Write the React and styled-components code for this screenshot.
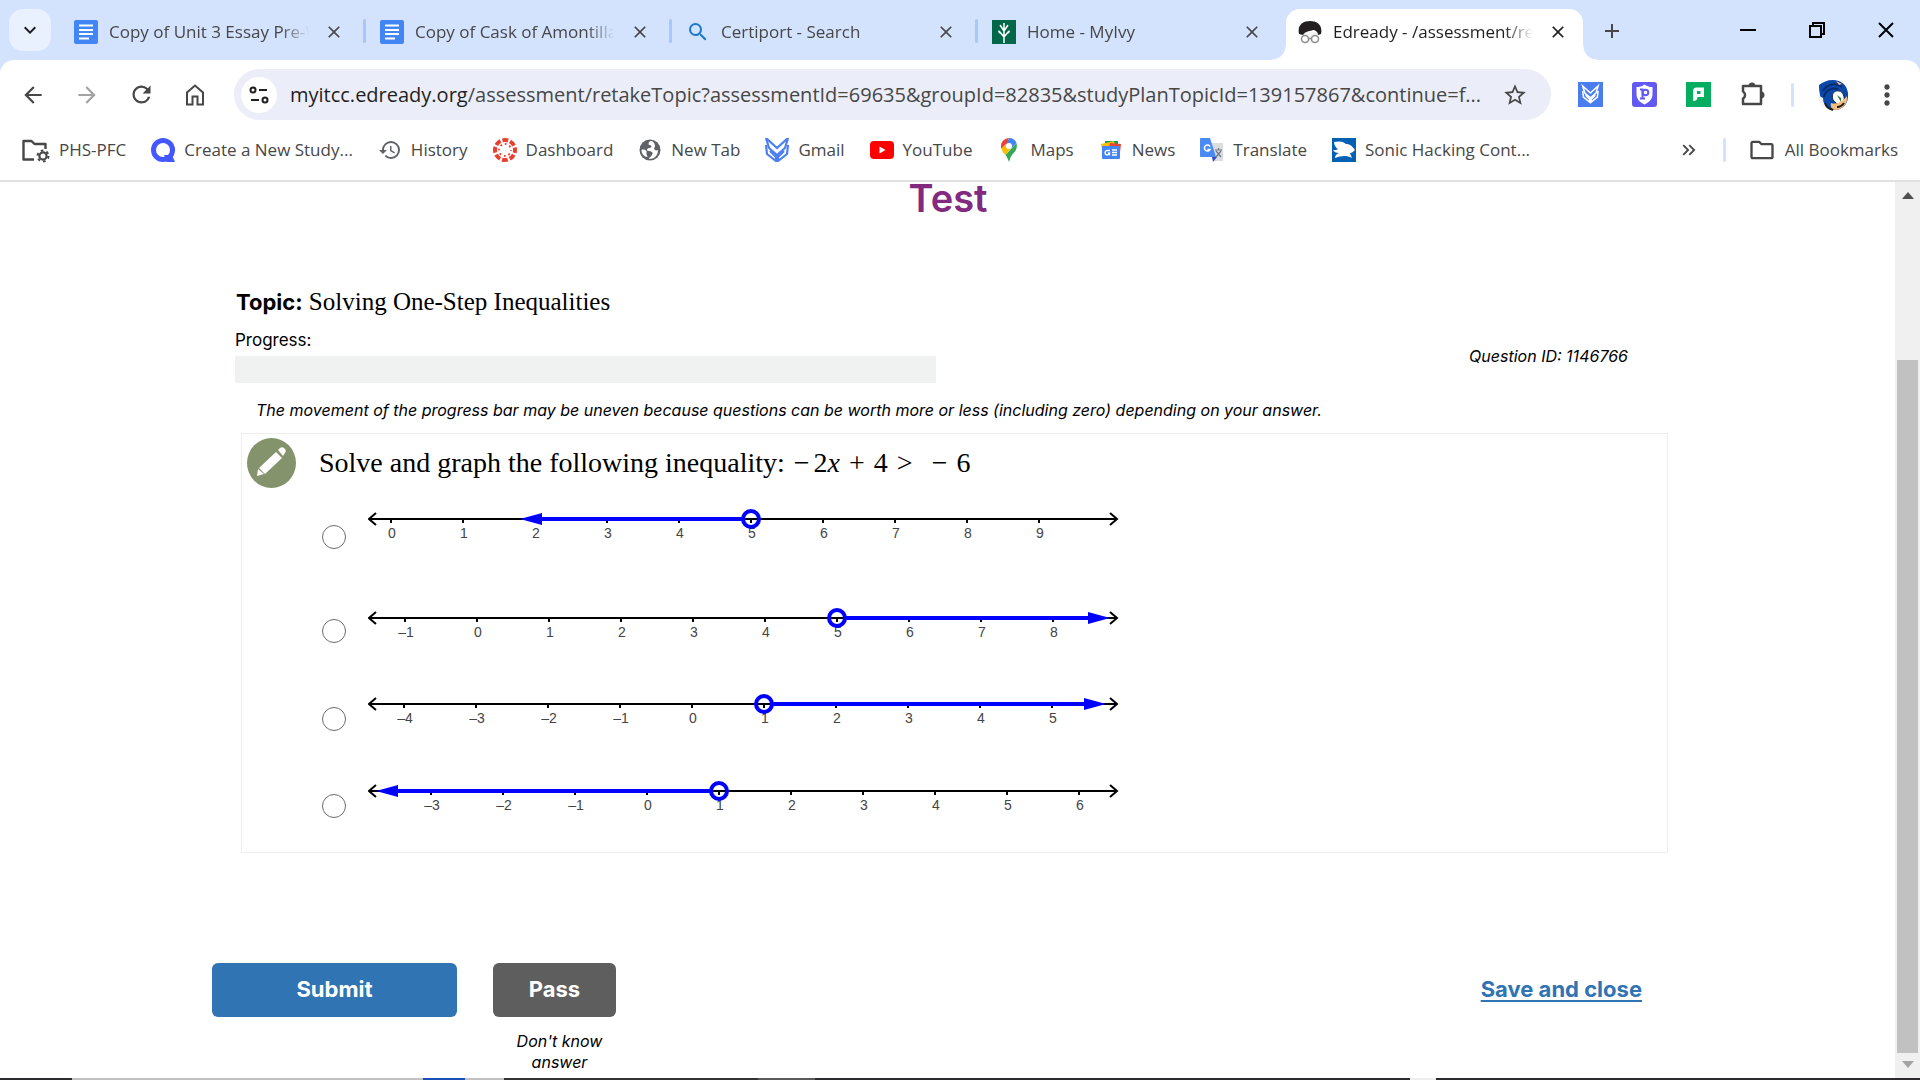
import React, { useState } from "react";
import styled, { createGlobalStyle } from "styled-components";
import {
  MdArrowBack,
  MdArrowForward,
  MdRefresh,
  MdHistory,
  MdStarBorder,
  MdMoreVert,
  MdOutlineFolder,
  MdClose,
  MdAdd,
  MdKeyboardArrowDown,
  MdKeyboardDoubleArrowRight,
  MdSearch,
} from "react-icons/md";

const GlobalStyle = createGlobalStyle`
    * { box-sizing: border-box; }
    body {
        margin: 0;
        background: #fff;
        overflow: hidden;
    }
    button { font: inherit; color: inherit; }
`

const uiFont = `"Open Sans", "Noto Sans", sans-serif`;
const pageFont = `Inter, "Open Sans", sans-serif`;
const serifFont = `"Liberation Serif", "Times New Roman", serif`;

const Window = styled.div`
    height: 100vh;
    display: flex;
    flex-direction: column;
    font-family: ${uiFont};
    color: #474747;
`

/* tab strip */
const TabStrip = styled.header`
    display: flex;
    align-items: flex-start;
    height: 60px;
    padding: 9px 0 0 9px;
    background: #d3e2fd;
`
const TabSearch = styled.button`
    display: flex;
    align-items: center;
    justify-content: center;
    width: 42px;
    height: 42px;
    margin-right: 9px;
    padding: 0;
    border: 0;
    border-radius: 14px;
    background: #e9f0fe;
    color: #1f1f1f;
`
const Tab = styled.div`
    position: relative;
    display: flex;
    align-items: center;
    gap: 11px;
    width: ${({ $active }) => ($active ? "297px" : "306px")};
    height: 51px;
    margin: ${({ $active }) => ($active ? "0 7px 0 2px" : "0")};
    padding: ${({ $active }) => ($active ? "0 13px 6px 12px" : "0 20px 6px 14px")};
    border-radius: 14px 14px 0 0;
    background: ${({ $active }) => ($active ? "#fff" : "transparent")};
    color: ${({ $active }) => ($active ? "#1f1f1f" : "#474747")};
    &::before, &::after {
        content: "";
        display: ${({ $active }) => ($active ? "block" : "none")};
        position: absolute;
        bottom: 0;
        width: 14px;
        height: 14px;
    }
    &::before {
        left: -14px;
        background: radial-gradient(circle at 0 0, transparent 13px, #fff 14px);
    }
    &::after {
        right: -14px;
        background: radial-gradient(circle at 100% 0, transparent 13px, #fff 14px);
    }
`
const TabTitle = styled.span`
    flex: 1;
    overflow: hidden;
    white-space: nowrap;
    font-size: 17px;
    line-height: 24px;
    mask-image: linear-gradient(to right, #000 85%, transparent 99%);
`
const PlainButton = styled.button`
    display: flex;
    align-items: center;
    justify-content: center;
    flex: none;
    width: ${({ $size }) => $size || 24}px;
    height: ${({ $size }) => $size || 24}px;
    padding: 0;
    border: 0;
    border-radius: 50%;
    background: none;
    color: ${({ $muted }) => ($muted ? "#a3a3a3" : "inherit")};
`
const TabDivider = styled.span`
    position: absolute;
    right: 0;
    top: 10px;
    width: 3px;
    height: 24px;
    border-radius: 2px;
    background: #a8c7fa;
`
const WindowButtons = styled.div`
    display: flex;
    margin-left: auto;
`
const WindowButton = styled.button`
    display: flex;
    align-items: center;
    justify-content: center;
    width: 69px;
    height: 42px;
    padding: 0;
    border: 0;
    background: none;
    color: #000;
`

/* address row */
const ToolbarBack = styled.div`
    background: #d3e2fd;
`
const Toolbar = styled.div`
    display: flex;
    align-items: center;
    gap: 18px;
    padding: 9px 15px;
    border-radius: 14px 14px 0 0;
    background: #fff;
`
const AddressBar = styled.div`
    flex: 1;
    min-width: 0;
    display: flex;
    align-items: center;
    height: 51px;
    margin: 0 3px;
    padding: 0 18px 0 7px;
    border-radius: 26px;
    background: #ebeef8;
`
const SiteInfo = styled(PlainButton)`
    margin-right: 13px;
    background: #fff;
    color: #1f1f1f;
`
const Url = styled.span`
    flex: 1;
    overflow: hidden;
    white-space: nowrap;
    font-size: 20px;
    line-height: 28px;
    color: #474747;
    b {
        font-weight: 400;
        color: #1f1f1f;
    }
`
const Divider = styled.span`
    width: 3px;
    height: 24px;
    margin: 0 3px;
    border-radius: 2px;
    background: #d3e2fd;
`

/* bookmarks */
const BookmarkBar = styled.nav`
    display: flex;
    align-items: center;
    gap: 25px;
    height: 53px;
    padding: 0 22px 9px 22px;
    border-bottom: 2px solid #e1e1e1;
`
const Bookmark = styled.a`
    display: flex;
    align-items: center;
    gap: 9px;
    font-size: 17px;
    line-height: 24px;
    white-space: nowrap;
    color: #474747;
    text-decoration: none;
`
const BookmarkEnd = styled.div`
    display: flex;
    align-items: center;
    gap: 19px;
    margin-left: auto;
`

/* page */
const Viewport = styled.div`
    flex: 1;
    min-height: 0;
    display: flex;
`
const Page = styled.main`
    flex: 1;
    min-width: 0;
    overflow: hidden;
    padding: 0 227px 0 212px;
    font-family: ${pageFont};
    color: #000;
`
const Title = styled.h1`
    margin: 0 0 72px 16px;
    text-align: center;
    font-size: 38px;
    line-height: 32px;
    font-weight: 600;
    color: #822980;
`
const Topic = styled.h2`
    margin: 0 0 10px 24px;
    font-family: ${serifFont};
    font-size: 25px;
    line-height: 32px;
    font-weight: 400;
    b {
        font-family: ${pageFont};
        font-size: 22px;
    }
`
const ProgressRow = styled.div`
    display: flex;
    align-items: center;
    justify-content: space-between;
    margin: 0 32px 15px 23px;
`
const ProgressBlock = styled.div`
    width: 50%;
    font-size: 17px;
    line-height: 24px;
`
const ProgressTrack = styled.div`
    height: 27px;
    margin-top: 4px;
    background: #f0f2f1;
`
const QuestionId = styled.span`
    margin-right: 8px;
    font-size: 16px;
    line-height: 24px;
    font-style: italic;
`
const Note = styled.p`
    margin: 0 0 11px 44px;
    font-size: 16px;
    line-height: 24px;
    font-style: italic;
`
const QuestionCard = styled.form`
    margin-left: 29px;
    border: 1px solid #eee;
`
const QuestionHead = styled.div`
    display: flex;
    align-items: center;
    gap: 23px;
    padding: 4px 5px 2px;
    font-family: ${serifFont};
    font-size: 28px;
    line-height: 32px;
`
const MathText = styled.span`
    margin-left: 9px;
    white-space: nowrap;
`
const Operator = styled.span`
    margin: 0 9px;
`
const Sign = styled.span`
    margin: 0 ${({ $wide }) => ($wide ? "9px" : "4px")} 0 ${({ $wide }) => ($wide ? "10px" : "0")};
`
const Option = styled.label`
    display: flex;
    align-items: center;
    gap: 22px;
    padding-left: 80px;
`
const Radio = styled.input`
    appearance: none;
    flex: none;
    width: 24px;
    height: 24px;
    margin: 0;
    border: 1px solid #6b6b6b;
    border-radius: 50%;
    background: #fff;
    &:checked {
        border: 7px solid #0075ff;
    }
`
const Actions = styled.div`
    display: flex;
    align-items: flex-start;
    margin-top: 110px;
`
const ActionButton = styled.button`
    width: ${({ $primary }) => ($primary ? "245px" : "123px")};
    height: 54px;
    padding: 0 0 2px;
    border: 0;
    border-radius: 6px;
    background: ${({ $primary }) => ($primary ? "#3074b4" : "#5e5e5e")};
    color: #fff;
    font-size: 22px;
    font-weight: 700;
`
const PassColumn = styled.div`
    margin-left: 36px;
    width: 133px;
`
const PassHint = styled.p`
    margin: 14px 0 0;
    padding: 0 20px;
    text-align: center;
    font-size: 16px;
    line-height: 21px;
    font-style: italic;
`
const SaveLink = styled.a`
    margin: 10px 26px 0 auto;
    font-size: 22px;
    line-height: 32px;
    font-weight: 700;
    color: #3074b4;
    text-underline-offset: 3px;
    text-decoration-thickness: 2px;
`

/* scrollbar and the sliver of taskbar under the window */
const Scrollbar = styled.div`
    display: flex;
    flex-direction: column;
    align-items: center;
    width: 25px;
    padding: 10px 0 9px;
    background: #f0f0f0;
`
const ScrollTrack = styled.div`
    flex: 1;
    width: 21px;
    margin: 3px 0 8px;
    display: flex;
    align-items: flex-end;
`
const ScrollThumb = styled.div`
    width: 100%;
    height: calc(82% - 4px);
    background: #c1c1c1;
`
const Taskbar = styled.div`
    height: 2px;
    background: linear-gradient(
        to right,
        #2d2b2d 72px, #c1c1c1 72px 423px, #1d4fb8 423px 465px,
        #c1c1c1 465px 504px, #333 504px 758px, #5a5a5a 758px 815px,
        #2d2b2d 815px 1410px, #eee 1410px 1436px, #2d2b2d 1436px
    );
`

const DocsIcon = () => (
  <svg width="24" height="24" viewBox="0 0 24 24">
    <rect width="24" height="24" rx="2" fill="#4285f4" />
    <path d="M5 5.500h14M5 10h14M5 14h14M5 18.500h10" stroke="#fff" strokeWidth="2" />
  </svg>
);

const IvyIcon = () => (
  <svg width="24" height="24" viewBox="0 0 24 24">
    <rect width="24" height="24" fill="#006848" />
    <path d="M12 23V3M12 17L7 11M12 17l5-6M12 11L8 5M12 11l4-6" stroke="#fff" strokeWidth="1.500" fill="none" />
    <path d="M7 10l1 4-2-2zM17 10l-1 4 2-2z" fill="#fff" />
  </svg>
);

const EdreadyIcon = () => (
  <svg width="24" height="24" viewBox="0 0 24 24">
    <path d="M3 12v5c1 5 5 6 9 6s8-1 9-6v-5z" fill="#f3f3f3" />
    <path d="M1 14C-1 5 5 1 12 1s13 4 11 13l-3 1c0-3-2-4-4-5-4 1-9 1-11 5l-4-1z" fill="#231f20" />
    <g fill="#fff" stroke="#8d8d8d" strokeWidth="1.500">
      <circle cx="7" cy="19" r="3.500" />
      <circle cx="17" cy="19" r="3.500" />
      <path d="M10.500 18.500h3" />
    </g>
  </svg>
);

const HomeIcon = () => (
  <svg width="24" height="24" viewBox="0 0 24 24">
    <path d="M4 21.500V9.500l8-7 8 7v12h-5.500v-8h-5v8z" fill="none" stroke="currentColor" strokeWidth="2" />
  </svg>
);

const TuneIcon = () => (
  <svg width="22" height="22" viewBox="0 0 22 22" fill="none" stroke="currentColor" strokeWidth="2">
    <circle cx="5" cy="6" r="2.500" />
    <circle cx="17" cy="16" r="2.500" />
    <path d="M11 6h8M3 16h8" />
  </svg>
);

const ExtensionIcon = () => (
  <svg width="28" height="28" viewBox="0 0 28 28">
    <path d="M5 5h18v18H5v-5.500a4 4 0 0 0 0-7z" fill="none" stroke="#474747" strokeWidth="2.500" strokeLinejoin="round" />
    <path d="M10.500 5a3.500 3.500 0 0 1 7 0zM23 10.500a3.500 3.500 0 0 1 0 7z" fill="#474747" />
  </svg>
);

const WingPaths = () => (
  <>
    <path d="M1 0l11 10L23 0l-3 10-8 7-8-7z" fill="none" strokeWidth="2.200" />
    <path d="M1 7l1 9 9 7v-6M23 7l-1 9-9 7v-6M5 13l6 6M19 13l-6 6" fill="none" strokeWidth="2.200" />
  </>
);

const WingIcon = () => (
  <svg width="24" height="24" viewBox="0 0 24 24" stroke="#4c80f1">
    <WingPaths />
  </svg>
);

const WingTile = () => (
  <svg width="25" height="25" viewBox="0 0 25 25">
    <rect width="25" height="25" fill="#4a7df0" />
    <g transform="translate(4 4) scale(.7)" stroke="#fff">
      <WingPaths />
    </g>
  </svg>
);

const ShieldIcon = () => (
  <svg width="25" height="25" viewBox="0 0 25 25">
    <rect width="25" height="25" rx="3" fill="#6259f5" />
    <path d="M12.500 2.500c3 2 5 2.500 8 2.500v7c0 5-3 8-8 10.500C7.500 20 4.500 17 4.500 12V5c3 0 5-.5 8-2.500z" fill="#fff" />
    <path d="M8 7.500h2.500v9M8 16.500h5" stroke="#6259f5" strokeWidth="2" fill="none" />
    <circle cx="13.500" cy="10.500" r="2.800" stroke="#6259f5" strokeWidth="2" fill="none" />
  </svg>
);

const GreenTile = () => (
  <svg width="25" height="25" viewBox="0 0 25 25">
    <rect width="25" height="25" fill="#05ad60" />
    <path d="M7 19V9c0-2 1.500-3.500 3.500-3.500H18V15h-6.500c0 2.500-1.500 4-4.500 4z" fill="#fff" />
    <rect x="11" y="9" width="3.500" height="3" fill="#05ad60" />
  </svg>
);

const Avatar = () => (
  <svg width="32" height="32" viewBox="0 0 32 32">
    <path d="M2 6c4-3 8-5 14-5 8 0 14 5 15 13 1 9-4 17-13 17-5 0-8-3-11-7-3-2-5-9-5-18z" fill="#0b48a8" />
    <path d="M1 15c1 2 3 3 5 4l1 10c-3-2-6-7-6-14z" fill="#f4f4f4" />
    <path d="M6 12c4-7 13-9 19-4M7 18c1-6 7-10 14-8" stroke="#062c6e" strokeWidth="2" fill="none" />
    <path d="M16 21c-2-6 1-10 6-9 4 0 6 6 5 12l-6 2z" fill="#fff" stroke="#12284e" />
    <path d="M20 16l4 3v4z" fill="#1f7a32" />
    <path d="M14 24c5 2 11-1 16-7 1 7-4 14-12 14-3-1-5-3-4-7z" fill="#f5be7b" />
    <path d="M8 24c1 4 4 6 8 7M20 28c3 0 5-1 7-4" stroke="#1d1d1d" strokeWidth="2" fill="none" />
    <path d="M19 2l6 3-3 1z" fill="#f5be7b" />
  </svg>
);

const FolderGearIcon = () => (
  <svg width="28" height="26" viewBox="0 0 28 26" fill="none" stroke="#474747">
    <path d="M12 22.500H1.500V4h8l3 3h11v5" strokeWidth="2.400" strokeLinejoin="round" />
    <circle cx="21" cy="19" r="3.600" strokeWidth="2.200" />
    <circle cx="21" cy="19" r="5.500" strokeWidth="2" strokeDasharray="2.600 3.160" />
  </svg>
);

const QuizIcon = () => (
  <svg width="24" height="24" viewBox="0 0 24 24">
    <circle cx="12" cy="12" r="9.500" fill="none" stroke="#4257ff" strokeWidth="5" />
    <path d="M13 17h8l3 7h-8z" fill="#4257ff" />
  </svg>
);

const CanvasIcon = () => (
  <svg width="24" height="24" viewBox="0 0 24 24" fill="none" stroke="#e8402f">
    <circle cx="12" cy="12" r="10" strokeWidth="4" strokeDasharray="5.800 2.054" strokeDashoffset="2.900" />
    <circle cx="12" cy="12" r="6" strokeWidth="1.800" strokeDasharray="1.800 2.912" strokeDashoffset=".9" />
  </svg>
);

const GlobeIcon = () => (
  <svg width="24" height="24" viewBox="0 0 24 24">
    <circle cx="12" cy="12" r="10.500" fill="#5f6368" />
    <path d="M14 3c-3 0-4 2-3 4 2 0 4 2 1 3-3 0-4 2-2 3 3 0 6 1 4 4-1 2-3 2-3 4 7 0 9-5 9-9-2 1-4 0-4-2 2-1 1-5-2-7z" fill="#fff" />
    <path d="M3.500 12c2-1 4 0 5 1v3c0 1 1 2 1 3-3 0-6-3-6-7z" fill="#fff" />
  </svg>
);

const YouTubeIcon = () => (
  <svg width="24" height="24" viewBox="0 0 24 24">
    <rect y="3" width="24" height="18" rx="4" fill="#f00" />
    <path d="M9.500 8.500v7l6-3.500z" fill="#fff" />
  </svg>
);

const MapsIcon = () => (
  <svg width="24" height="24" viewBox="0 0 24 24">
    <path d="M12 0a8 8 0 0 0-6 2.700L9.500 6z" fill="#ea4335" />
    <path d="M6 2.700a8 8 0 0 0-1.500 8L12 3z" fill="#ea4335" />
    <path d="M12 0c4 0 6.500 2 7.500 5l-7 7-3-6z" fill="#4285f4" />
    <path d="M4.500 10.500L10 6l4 4-5.500 7c-2-2-3.500-4-4-6.500z" fill="#fbbc04" />
    <path d="M19.500 5c1.500 6-2 9-4.500 12-2 2-2 5-3 7-1-2-1.500-5-3.500-7z" fill="#34a853" />
    <circle cx="12" cy="8" r="3" fill="#fff" />
  </svg>
);

const NewsIcon = () => (
  <svg width="24" height="24" viewBox="0 0 24 24">
    <path d="M6 3h13v8H6z" fill="#0c9d58" />
    <path d="M2 6l13-3 2 8H3z" fill="#fbbc04" />
    <path d="M11 5l11 1-1 8H9z" fill="#ea4335" />
    <rect x="3" y="8" width="18" height="13" rx="1" fill="#4285f4" />
    <path d="M11 12.500H8.500a2.200 2.200 0 1 0 1 4h1V15H9M13 12h5M13 14.500h5M13 17h5" stroke="#fff" strokeWidth="1.400" fill="none" />
  </svg>
);

const TranslateIcon = () => (
  <svg width="24" height="24" viewBox="0 0 24 24">
    <path d="M10 5h13v18H14z" fill="#dadce0" />
    <path d="M12 19h5l-4 5z" fill="#3a48c9" />
    <path d="M1 0h9l6 19H1a1 1 0 0 1-1-1V1a1 1 0 0 1 1-1z" fill="#4a8af4" />
    <path d="M10 8.500a3 3 0 1 0 0 3H7.500" stroke="#fff" strokeWidth="1.500" fill="none" />
    <path d="M15 12h7M18.500 10v2M16 13l5 6M21 13l-5 6" stroke="#6b7a80" strokeWidth="1.200" fill="none" />
  </svg>
);

const HedgehogIcon = () => (
  <svg width="24" height="24" viewBox="0 0 24 24">
    <rect width="24" height="24" fill="#0460b3" />
    <path d="M2 4c5-1 9-1 12 2 4 0 6 2 9 6-2 2-3 3-5 3l2 5c-6-3-11-2-17 0 0-3 2-4 4-5-3 0-5-1-6-3 2 0 4 0 5-1-2-1-4-4-4-7z" fill="#fff" />
  </svg>
);

const PencilBadge = () => (
  <svg width="49" height="50" viewBox="0 0 49 50">
    <ellipse cx="24.500" cy="25" rx="24.500" ry="25" fill="#84936c" />
    <g fill="#fff">
      <path d="M29 14l6 6-17 16-6-6z" />
      <path d="M31 12l2-2c1-1 3-1 4 0l1 1c1 1 1 3 0 4l-2 3z" />
      <path d="M11 31l6 5-7 2z" />
    </g>
  </svg>
);

/* Number line: `start` is the x of the first tick, `open` the value under the open circle. */
const NumberLine = ({ height, axis, start, first, open, tip }) => {
  const step = 72;
  const at = (v) => start + (v - first) * step;
  const x = at(open);
  const dir = tip > x ? 1 : -1;
  return (
    <svg width="752" height={height}>
      <path
        d={`M1 ${axis}H749M8 ${axis - 6}L1 ${axis}L8 ${axis + 6}M742 ${axis - 6}L749 ${axis}L742 ${axis + 6}`}
        stroke="#000"
        strokeWidth="2"
        fill="none"
      />
      {Array.from({ length: 10 }, (_, i) => first + i).map((v) => (
        <g key={v}>
          <rect x={at(v) - 1} y={axis} width="2" height="4" fill="#000" />
          <text x={at(v) + 1} y={axis + 19} textAnchor="middle" fontFamily="Liberation Sans, sans-serif" fontSize="14" fill="#444">
            {v < 0 ? `–${-v}` : v}
          </text>
        </g>
      ))}
      <path d={`M${x + dir * 9} ${axis}H${tip - dir * 20}`} stroke="#00f" strokeWidth="4" />
      <path d={`M${tip} ${axis}l${-dir * 22} -6v12z`} fill="#00f" />
      <circle cx={x} cy={axis} r="8" fill="none" stroke="#00f" strokeWidth="4" />
    </svg>
  );
};

const tabs = [
  { title: "Copy of Unit 3 Essay Pre-W", icon: <DocsIcon /> },
  { title: "Copy of Cask of Amontilla", icon: <DocsIcon /> },
  { title: "Certiport - Search", icon: <MdSearch size={24} color="#1a78d0" /> },
  { title: "Home - MyIvy", icon: <IvyIcon /> },
  { title: "Edready - /assessment/re", icon: <EdreadyIcon />, active: true },
];

const bookmarks = [
  { label: "PHS-PFC", icon: <FolderGearIcon /> },
  { label: "Create a New Study...", icon: <QuizIcon /> },
  { label: "History", icon: <MdHistory size={24} color="#5f6368" /> },
  { label: "Dashboard", icon: <CanvasIcon /> },
  { label: "New Tab", icon: <GlobeIcon /> },
  { label: "Gmail", icon: <WingIcon /> },
  { label: "YouTube", icon: <YouTubeIcon /> },
  { label: "Maps", icon: <MapsIcon /> },
  { label: "News", icon: <NewsIcon /> },
  { label: "Translate", icon: <TranslateIcon /> },
  { label: "Sonic Hacking Cont...", icon: <HedgehogIcon /> },
];

const options = [
  { height: 94, axis: 29, start: 23, first: 0, open: 5, tip: 152 },
  { height: 94, axis: 34, start: 37, first: -1, open: 5, tip: 742 },
  { height: 82, axis: 26, start: 36, first: -4, open: 1, tip: 738 },
  { height: 92, axis: 31, start: 63, first: -3, open: 1, tip: 8 },
];

const App = () => {
  const [answer, setAnswer] = useState(null);

  return (
    <Window>
      <GlobalStyle />
      <TabStrip>
        <TabSearch aria-label="Search tabs"><MdKeyboardArrowDown size={24} /></TabSearch>
        {tabs.map(({ title, icon, active }, i) => (
          <Tab key={title} $active={active}>
            {icon}
            <TabTitle>{title}</TabTitle>
            <PlainButton aria-label="Close tab"><MdClose size={20} /></PlainButton>
            {i < 3 && <TabDivider />}
          </Tab>
        ))}
        <PlainButton $size={44} aria-label="New tab"><MdAdd size={24} /></PlainButton>
        <WindowButtons>
          <WindowButton aria-label="Minimize">
            <svg width="16" height="16"><path d="M0 8h16" stroke="currentColor" strokeWidth="2" /></svg>
          </WindowButton>
          <WindowButton aria-label="Restore">
            <svg width="16" height="16" fill="none" stroke="currentColor" strokeWidth="2">
              <path d="M1 4h11v11H1zM4 4V1h11v11h-3" />
            </svg>
          </WindowButton>
          <WindowButton aria-label="Close">
            <svg width="16" height="16"><path d="M1 1l14 14M15 1L1 15" stroke="currentColor" strokeWidth="2" /></svg>
          </WindowButton>
        </WindowButtons>
      </TabStrip>

      <ToolbarBack>
        <Toolbar>
          <PlainButton $size={36} aria-label="Back"><MdArrowBack size={26} /></PlainButton>
          <PlainButton $size={36} $muted aria-label="Forward"><MdArrowForward size={26} /></PlainButton>
          <PlainButton $size={36} aria-label="Reload"><MdRefresh size={27} /></PlainButton>
          <PlainButton $size={36} aria-label="Home"><HomeIcon /></PlainButton>
          <AddressBar>
            <SiteInfo $size={36} aria-label="Site information"><TuneIcon /></SiteInfo>
            <Url>
              <b>myitcc.edready.org</b>/assessment/retakeTopic?assessmentId=69635&amp;groupId=82835&amp;studyPlanTopicId=139157867&amp;continue=f...
            </Url>
            <PlainButton $size={36} aria-label="Bookmark this tab"><MdStarBorder size={26} /></PlainButton>
          </AddressBar>
          <PlainButton $size={36} aria-label="Extension"><WingTile /></PlainButton>
          <PlainButton $size={36} aria-label="Extension"><ShieldIcon /></PlainButton>
          <PlainButton $size={36} aria-label="Extension"><GreenTile /></PlainButton>
          <PlainButton $size={36} aria-label="Extensions"><ExtensionIcon /></PlainButton>
          <Divider />
          <PlainButton $size={36} aria-label="Profile"><Avatar /></PlainButton>
          <PlainButton $size={36} aria-label="Menu"><MdMoreVert size={32} /></PlainButton>
        </Toolbar>
      </ToolbarBack>

      <BookmarkBar>
        {bookmarks.map(({ label, icon }) => (
          <Bookmark key={label} href="#">{icon}{label}</Bookmark>
        ))}
        <BookmarkEnd>
          <PlainButton aria-label="More bookmarks"><MdKeyboardDoubleArrowRight size={22} /></PlainButton>
          <Divider />
          <Bookmark href="#"><MdOutlineFolder size={28} />All Bookmarks</Bookmark>
        </BookmarkEnd>
      </BookmarkBar>

      <Viewport>
        <Page>
          <Title>Test</Title>
          <Topic><b>Topic:</b> Solving One-Step Inequalities</Topic>
          <ProgressRow>
            <ProgressBlock>
              Progress:
              <ProgressTrack />
            </ProgressBlock>
            <QuestionId>Question ID: 1146766</QuestionId>
          </ProgressRow>
          <Note>
            The movement of the progress bar may be uneven because questions can be worth more or less (including zero) depending on your answer.
          </Note>
          <QuestionCard>
            <QuestionHead>
              <PencilBadge />
              <span>
                Solve and graph the following inequality:
                <MathText>
                  <Sign>−</Sign>2<i>x</i><Operator>+</Operator>4<Operator>&gt;</Operator><Sign $wide>−</Sign>6
                </MathText>
              </span>
            </QuestionHead>
            {options.map((option, i) => (
              <Option key={i}>
                <Radio
                  type="radio"
                  name="answer"
                  aria-label={`Answer ${i + 1}`}
                  checked={answer === i}
                  onChange={() => setAnswer(i)}
                />
                <NumberLine {...option} />
              </Option>
            ))}
          </QuestionCard>
          <Actions>
            <ActionButton $primary>Submit</ActionButton>
            <PassColumn>
              <ActionButton>Pass</ActionButton>
              <PassHint>Don't know answer</PassHint>
            </PassColumn>
            <SaveLink href="#">Save and close</SaveLink>
          </Actions>
        </Page>
        <Scrollbar>
          <svg width="12" height="8"><path d="M0 7L6 0l6 7z" fill="#505050" /></svg>
          <ScrollTrack><ScrollThumb /></ScrollTrack>
          <svg width="12" height="8"><path d="M0 0l6 7 6-7z" fill="#a3a3a3" /></svg>
        </Scrollbar>
      </Viewport>
      <Taskbar />
    </Window>
  );
};

export default App;
